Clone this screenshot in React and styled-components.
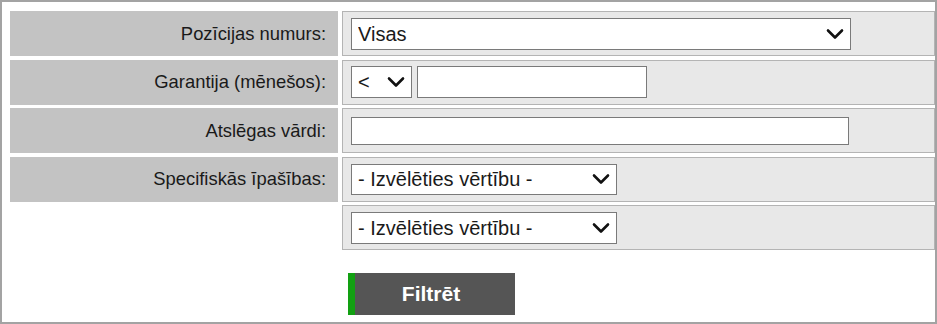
import React from "react";
import styled, { createGlobalStyle } from "styled-components";

const GlobalStyle = createGlobalStyle`
  html, body {
    margin: 0;
    padding: 0;
    background: #ffffff;
  }
  body {
    font-family: "Liberation Sans", Arial, sans-serif;
  }
`;

const Frame = styled.div`
  box-sizing: border-box;
  width: 937px;
  height: 324px;
  border: 2px solid #a3a3a3;
  padding: 9px 0 0 8px;
  background: #fff;
`;

const FilterGrid = styled.div`
  display: grid;
  grid-template-columns: 328px 1fr;
  grid-auto-rows: 45px;
  column-gap: 4px;
  row-gap: 3.5px;
`;

const LabelCell = styled.div`
  display: flex;
  align-items: center;
  justify-content: flex-end;
  padding-right: 12px;
  background: #c3c3c3;
  color: #1a1a1a;
  font-size: 18.4px;
`;

const ValueCell = styled.div`
  box-sizing: border-box;
  grid-column: 2;
  display: flex;
  align-items: center;
  gap: 5px;
  padding-left: 8px;
  background: #e8e8e8;
  border: 1px solid #b4b4b4;
`;

const SelectWrap = styled.span`
  position: relative;
  display: inline-block;
  width: ${(p) => p.$width}px;
  height: ${(p) => p.$height || 32}px;
`;

const NativeSelect = styled.select`
  appearance: none;
  box-sizing: border-box;
  width: 100%;
  height: 100%;
  margin: 0;
  padding: 0 30px 0 6px;
  border: 1px solid #7a7a7a;
  border-radius: 0;
  background: #fff;
  color: #1a1a1a;
  font-family: "Liberation Sans", Arial, sans-serif;
  font-size: 20px;
  outline: none;
`;

const Chevron = styled.svg`
  position: absolute;
  right: 7px;
  top: 50%;
  transform: translateY(-50%);
  pointer-events: none;
`;

const TextInput = styled.input`
  box-sizing: border-box;
  width: ${(p) => p.$width}px;
  height: ${(p) => p.$height}px;
  margin: 0;
  padding: 0 6px;
  border: 1px solid #7a7a7a;
  background: #fff;
  font-family: "Liberation Sans", Arial, sans-serif;
  font-size: 20px;
  outline: none;
`;

const ButtonRow = styled.div`
  grid-column: 2;
  padding: 19px 0 0 6px;
`;

const FilterButton = styled.button`
  box-sizing: border-box;
  width: 167px;
  height: 42px;
  border: none;
  border-left: 7px solid #12a012;
  background: #555555;
  color: #ffffff;
  font-family: "Liberation Sans", Arial, sans-serif;
  font-size: 21px;
  font-weight: bold;
  padding: 0 8px 0 0;
  cursor: pointer;
`;

const Select = ({ width, height, options }) => (
  <SelectWrap $width={width} $height={height}>
    <NativeSelect defaultValue={options[0]}>
      {options.map((o) => (
        <option key={o}>{o}</option>
      ))}
    </NativeSelect>
    <Chevron width="18" height="11" viewBox="0 0 18 11">
      <polyline
        points="2,2 9,9 16,2"
        fill="none"
        stroke="#111"
        strokeWidth="2.6"
        strokeLinecap="round"
        strokeLinejoin="round"
      />
    </Chevron>
  </SelectWrap>
);

const valueOptions = ["- Izvēlēties vērtību -"];

export default function App() {
  return (
    <>
      <GlobalStyle />
      <Frame>
        <FilterGrid>
          <LabelCell>Pozīcijas numurs:</LabelCell>
          <ValueCell>
            <Select width={500} height={32} options={["Visas"]} />
          </ValueCell>

          <LabelCell>Garantija (mēnešos):</LabelCell>
          <ValueCell>
            <Select width={61} height={32} options={["<", ">", "="]} />
            <TextInput $width={230} $height={32} />
          </ValueCell>

          <LabelCell>Atslēgas vārdi:</LabelCell>
          <ValueCell>
            <TextInput $width={498} $height={28} />
          </ValueCell>

          <LabelCell>Specifiskās īpašības:</LabelCell>
          <ValueCell>
            <Select width={266} height={31} options={valueOptions} />
          </ValueCell>

          <ValueCell>
            <Select width={266} height={32} options={valueOptions} />
          </ValueCell>

          <ButtonRow>
            <FilterButton>Filtrēt</FilterButton>
          </ButtonRow>
        </FilterGrid>
      </Frame>
    </>
  );
}
